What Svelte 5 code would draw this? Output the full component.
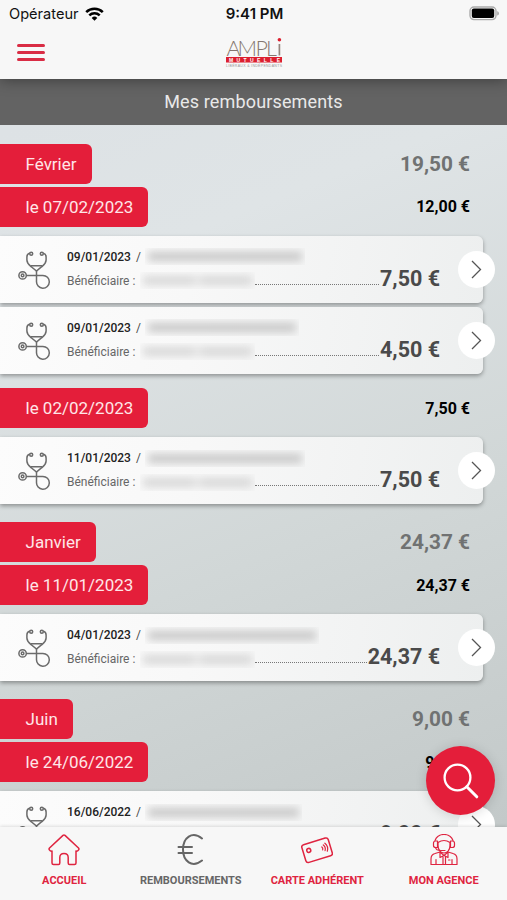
<script>
  const months = [
    {
      name: "Février",
      total: "19,50 €",
      days: [
        {
          date: "07/02/2023",
          total: "12,00 €",
          items: [
            { date: "09/01/2023", amount: "7,50 €", width: 160 },
            { date: "09/01/2023", amount: "4,50 €", width: 154 },
          ],
        },
        {
          date: "02/02/2023",
          total: "7,50 €",
          items: [{ date: "11/01/2023", amount: "7,50 €", width: 160 }],
        },
      ],
    },
    {
      name: "Janvier",
      total: "24,37 €",
      days: [
        {
          date: "11/01/2023",
          total: "24,37 €",
          items: [{ date: "04/01/2023", amount: "24,37 €", width: 174 }],
        },
      ],
    },
    {
      name: "Juin",
      total: "9,00 €",
      days: [
        {
          date: "24/06/2022",
          total: "9,00 €",
          items: [{ date: "16/06/2022", amount: "9,00 €", width: 157 }],
        },
      ],
    },
  ];

  const tabs = [
    { id: "home", label: "ACCUEIL" },
    { id: "euro", label: "REMBOURSEMENTS" },
    { id: "card", label: "CARTE ADHÉRENT" },
    { id: "agency", label: "MON AGENCE" },
  ];

  let activeTab = $state("euro");
</script>

<div class="app">
  <header class="header">
    <div class="status">
      <div class="status_operator">
        <span>Opérateur</span>
        <svg width="19" height="14" viewBox="0 0 19 14" fill="none" stroke="#000" stroke-width="2.5">
          <path d="M1.2 5.2a11.8 11.8 0 0 1 16.6 0" />
          <path d="M4.3 8.4a7.4 7.4 0 0 1 10.4 0" />
          <path d="M9.5 13.7 6.7 10.9a4 4 0 0 1 5.6 0z" fill="#000" stroke="none" />
        </svg>
      </div>
      <span class="status_time">9:41 PM</span>
      <svg class="status_battery" width="31" height="15" viewBox="0 0 31 15">
        <rect x="1" y="1" width="26" height="12.6" rx="4" fill="#f7f7f7" stroke="#aaa" stroke-width="1.4" />
        <rect x="2.8" y="2.6" width="22.4" height="9.4" rx="2" />
        <path d="M28.3 5.2c2 .6 2 3.8 0 4.4z" fill="#999" />
      </svg>
    </div>
    <div class="bar">
      <button class="menu" aria-label="Menu"><i></i><i></i><i></i></button>
      <svg class="logo" width="58" height="31" viewBox="0 0 58 31">
        <text class="logo_name" x="1.5 12.5 30.5 41" y="18.5">AMPL</text>
        <path d="M54.4 7v11.5" stroke="#95877f" stroke-width="1.7" />
        <circle cx="54.4" cy="2.8" r="1.8" fill="#dc1f2f" />
        <rect x="1" y="20" width="56" height="5.5" fill="#dc1f2f" />
        <text class="logo_bar" x="4" y="24.5" textLength="51">MUTUELLE</text>
        <text class="logo_sub" x="1" y="30" textLength="56">LIBÉRAUX &amp; INDÉPENDANTS</text>
      </svg>
    </div>
  </header>

  <h1 class="title">Mes remboursements</h1>

  <main class="list">
    {#each months as month}
      <section class="month">
        <div class="row row-month">
          <span class="tag">{month.name}</span>
          <span class="row_total">{month.total}</span>
        </div>
        {#each month.days as day}
          <div class="day">
            <div class="row">
              <span class="tag">le {day.date}</span>
              <span class="row_total">{day.total}</span>
            </div>
            <div class="cards">
              {#each day.items as item}
                <article class="card">
                  <svg class="card_icon" width="33" height="38" viewBox="0 0 33 38" fill="none" stroke="#6b6b6b" stroke-width="1.5">
                    <circle cx="13.2" cy="2.7" r="1.5" />
                    <circle cx="23.8" cy="2.7" r="1.5" />
                    <path d="M11.7 2.2C9.6 2.600 8.900 4 8.900 6v3c0 3.800 2.800 5.300 5 7.200l4.600 3.800 4.600-3.800c2.200-1.900 5-3.400 5-7.200V6c0-2-.7-3.400-2.800-3.800" />
                    <path d="M12.600 14.800h11.800M18.500 19.600v10.800a6.400 6.400 0 1 0 6.400-6H8.400" />
                    <circle cx="4.600" cy="24.400" r="3.700" />
                    <circle cx="4.600" cy="24.400" r="1.300" />
                  </svg>
                  <div class="card_body">
                    <div class="card_line">
                      <span class="card_date">{item.date}</span>
                      <span class="card_slash">/</span>
                      <span class="mask" style:width="{item.width}px"><i></i></span>
                    </div>
                    <div class="card_line card_line-who">
                      <span class="card_label">Bénéficiaire :</span>
                      <span class="mask mask-who"><i></i></span>
                      <span class="dots"></span>
                      <strong class="card_amount">{item.amount}</strong>
                    </div>
                  </div>
                  <button class="card_open" aria-label="Détail">
                    <svg width="11" height="19" viewBox="0 0 11 19" fill="none" stroke="#555" stroke-width="1.3">
                      <path d="m1 1 8.500 8.500L1 18" />
                    </svg>
                  </button>
                </article>
              {/each}
            </div>
          </div>
        {/each}
      </section>
    {/each}
  </main>

  <button class="search" aria-label="Rechercher">
    <svg width="36" height="36" viewBox="0 0 36 36" fill="none" stroke="#fff">
      <circle cx="14.5" cy="14.5" r="12.9" stroke-width="2.3" />
      <path d="m23.8 23.8 10 10" stroke-width="3" stroke-linecap="round" />
    </svg>
  </button>

  <nav class="tabs">
    {#each tabs as tab}
      <button class="tab" class:active={activeTab === tab.id} onclick={() => (activeTab = tab.id)}>
        <svg width="32" height="32" viewBox="0 0 32 32" fill="none" stroke="currentColor" stroke-width="1.5" stroke-linecap="round" stroke-linejoin="round">
          {#if tab.id === "home"}
            <path d="M15 1.400q1-.8 2 0L30.500 14q.9 1 0 2l-1 1q-.7.500-1.500 0V29q0 1.500-1.500 1.500h-5q-1.300 0-1.300-1.500v-5.500q0-4-4.200-4t-4.200 4V29q0 1.500-1.300 1.500h-5Q4 30.500 4 29V17q-.8.500-1.500 0l-1-1q-.9-1 0-2z" />
          {:else if tab.id === "euro"}
            <path d="M27 4.500C17-3.500 8 4 8 15.500S17 34.500 27 26.500M3.500 13H17M3.500 19H17" stroke-width="2" />
          {:else if tab.id === "card"}
            <g transform="rotate(-17 16 16)">
              <rect x="2.2" y="7" width="27.6" height="18.5" rx="2.5" />
              <circle cx="8" cy="14" r="2" />
              <path d="M21.500 14.500q1 1.500 0 3M23.500 13q2 3 0 6M25.500 11.800q2.800 4.200 0 8.400" stroke-width="1.2" />
            </g>
          {:else}
            <g stroke-width="1.2">
              <path d="M7 6.500C10-1.500 22-1.500 25 6.500M10 8.500q6-4 12 0v3c0 5-3 7.500-6 7.500s-6-2.500-6-7.500z" />
              <path d="M9.500 7H7.800Q5.500 7 5.500 9v2.500q0 2 2.300 2h1.700zM22.500 7h1.700q2.300 0 2.300 2v2.500q0 2-2.300 2h-1.700zM7.500 13.500q.5 3 5.500 3h4" />
              <path d="M3 30.500V25q0-4.500 4-5.500l5-1.500 4 3.500 4-3.500 5 1.500q4 1 4 5.500v5.500zM12 18v5.500l4-2 4 2V18M15 23v7.500M17.500 23v7.500M8 25.500v5M24 25.500v5M20.500 26H22" />
            </g>
          {/if}
        </svg>
        <span>{tab.label}</span>
      </button>
    {/each}
  </nav>
</div>

<style>
  :global(body) {
    margin: 0;
  }

  .app {
    position: relative;
    display: flex;
    flex-direction: column;
    width: 507px;
    height: 900px;
    overflow: hidden;
    background: linear-gradient(158deg, #dde2e5 12%, #dfe4e6 28%, #d1d7d7 60%, #c0c6c6 100%);
    font-family: Roboto, "Liberation Sans", sans-serif;
    color: #4a4a4a;
  }

  button {
    padding: 0;
    border: 0;
    background: none;
    font: inherit;
    color: inherit;
  }

  svg {
    display: block;
  }

  .header {
    position: relative;
    z-index: 1;
    flex: none;
    height: 79px;
    background: #f7f7f7;
    box-shadow: 0 1px 14px rgba(0, 0, 0, 0.4);
  }

  .status {
    display: grid;
    grid-template-columns: 1fr auto 1fr;
    align-items: center;
    height: 27px;
    padding: 0 7px 0 9px;
    font-family: Inter, sans-serif;
    font-size: 14.6px;
    color: #111;
  }

  .status_operator {
    display: flex;
    align-items: center;
    gap: 6px;
  }

  .status_time {
    font-size: 15px;
    font-weight: 600;
  }

  .status_battery {
    justify-self: end;
  }

  .bar {
    display: grid;
    grid-template-columns: 1fr auto 1fr;
    align-items: center;
    height: 51px;
    padding: 0 17px;
  }

  .menu {
    display: flex;
    flex-direction: column;
    gap: 4.5px;
    width: 28px;
  }

  .menu i {
    height: 2.7px;
    border-radius: 2px;
    background: #d92c44;
  }

  .logo {
    overflow: visible;
  }

  .logo_name {
    font: 300 21.5px Lato, sans-serif;
    fill: #85776f;
  }

  .logo_bar {
    font: 700 5px "Liberation Sans", sans-serif;
    fill: #fff;
  }

  .logo_sub {
    font: 3.5px "Liberation Sans", sans-serif;
    fill: #999;
  }

  .title {
    flex: none;
    margin: 0;
    background: #636363;
    color: #e9e9e9;
    font-size: 18px;
    font-weight: 400;
    line-height: 46px;
    letter-spacing: 0.15px;
    text-align: center;
  }

  .list {
    flex: 1;
    min-height: 0;
    padding-top: 19px;
    overflow: hidden;
  }

  .month {
    margin-bottom: 18.2px;
  }

  .row {
    display: flex;
    align-items: center;
    justify-content: space-between;
    height: 40px;
    padding-right: 37px;
    margin-bottom: 9px;
  }

  .row-month {
    margin-bottom: 2.8px;
  }

  .tag {
    padding: 0 15px 0 25.5px;
    border-radius: 0 6px 6px 0;
    background: #e41e3a;
    color: #ffe6e8;
    font-size: 17px;
    line-height: 40px;
  }

  .row_total {
    color: #000;
    font-size: 16px;
    font-weight: 700;
  }

  .row-month .row_total {
    color: #707272;
    font-size: 20.8px;
  }

  .day + .day {
    margin-top: 14.5px;
  }

  .cards {
    display: flex;
    flex-direction: column;
    gap: 4px;
  }

  .card {
    position: relative;
    display: flex;
    box-sizing: border-box;
    width: 483px;
    height: 67px;
    padding: 15px 43px 0 18px;
    border-radius: 0 6px 6px 0;
    background: linear-gradient(100deg, #fcfcfc, #f8f8f8 40%, #edefef);
    box-shadow: 0 2px 4px rgba(0, 0, 0, 0.35);
  }

  .card_icon {
    flex: none;
    margin-right: 16px;
  }

  .card_body {
    flex: 1;
  }

  .card_line {
    display: flex;
    align-items: center;
    height: 12px;
    font-size: 12px;
    white-space: nowrap;
  }

  .card_line-who {
    height: 24px;
    margin-top: 6px;
  }

  .card_date {
    width: 69px;
    color: #222;
    font-weight: 500;
  }

  .card_slash {
    width: 9px;
  }

  .card_label {
    width: 73px;
    color: #666;
  }

  .mask {
    box-sizing: border-box;
    height: 17px;
    padding: 4px 3px;
    overflow: hidden;
  }

  .mask i {
    display: block;
    height: 9px;
    background: #c6c6c6;
    filter: blur(4px);
  }

  .mask-who {
    width: 115px;
  }

  .mask-who i {
    background: linear-gradient(90deg, #d6d6d6 45%, #e9e9e9 50%, #d6d6d6 55%);
  }

  .dots {
    flex: 1;
    align-self: flex-end;
    margin: 0 1px 8px 0;
    border-bottom: 1px dotted #777;
  }

  .card_amount {
    font-size: 21.5px;
    font-weight: 700;
    line-height: 24px;
    margin-bottom: 4px;
  }

  .card_open {
    position: absolute;
    top: 15px;
    right: -12px;
    display: grid;
    place-items: center;
    width: 37px;
    height: 37px;
    border-radius: 50%;
    background: #fff;
  }

  .search {
    position: absolute;
    right: 12px;
    bottom: 85px;
    z-index: 2;
    display: grid;
    place-items: center;
    width: 69px;
    height: 69px;
    border-radius: 50%;
    background: #e41e3a;
    box-shadow: 0 1px 12px rgba(0, 0, 0, 0.15);
  }

  .tabs {
    position: relative;
    z-index: 1;
    display: grid;
    grid-template-columns: repeat(4, 1fr);
    flex: none;
    height: 73px;
    padding-left: 1px;
    background: #f7f7f7;
    box-shadow: 0 -1px 3px rgba(0, 0, 0, 0.12);
  }

  .tab {
    display: flex;
    flex-direction: column;
    align-items: center;
    gap: 8px;
    padding-top: 7px;
    color: #df2440;
    font-size: 11px;
    font-weight: 700;
    line-height: 14px;
  }

  .tab.active {
    color: #666;
  }
</style>
